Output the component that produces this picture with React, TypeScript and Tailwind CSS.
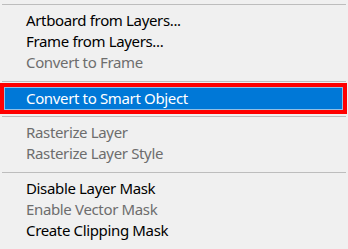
const ENABLED = "text-black";
const DISABLED = "text-[#6d6d6d]";

type Item = { label: string; disabled?: boolean };

function Row({ item }: { item: Item }) {
  return (
    <div className={`h-[21px] pl-[26px] leading-[21px] whitespace-nowrap ${item.disabled ? DISABLED : ENABLED}`}>
      {item.label}
    </div>
  );
}

function Separator() {
  return <div className="ml-[2px] h-px w-[344px] bg-[#bdbdbd]" />;
}

const groupA: Item[] = [
  { label: "Artboard from Layers..." },
  { label: "Frame from Layers..." },
  { label: "Convert to Frame", disabled: true },
];

const groupB: Item[] = [
  { label: "Rasterize Layer", disabled: true },
  { label: "Rasterize Layer Style", disabled: true },
];

const groupC: Item[] = [
  { label: "Disable Layer Mask" },
  { label: "Enable Vector Mask", disabled: true },
  { label: "Create Clipping Mask" },
];

export default function App() {
  return (
    <div
      className="flex h-[249px] w-[348px] flex-col overflow-hidden bg-[#f0f0f0] pt-[4px] text-[15px] tracking-[-0.35px]"
      style={{ fontFamily: '"Noto Sans", "Open Sans", sans-serif' }}
    >
      <Separator />
      <div className="mt-[5px] flex flex-col">
        {groupA.map((it) => (
          <Row key={it.label} item={it} />
        ))}
      </div>
      <div className="mt-[8px]">
        <Separator />
      </div>
      <div className="mt-[1px] w-[347px] border-[4px] border-[#ff0000]">
        <div className="h-[23px] border border-[#8fbfe6] bg-[#0078d7] pl-[21px] leading-[21px] text-white whitespace-nowrap">
          Convert to Smart Object
        </div>
      </div>
      <div className="mt-[2px]">
        <Separator />
      </div>
      <div className="mt-[5px] flex flex-col">
        {groupB.map((it) => (
          <Row key={it.label} item={it} />
        ))}
      </div>
      <div className="mt-[8px]">
        <Separator />
      </div>
      <div className="mt-[5px] flex flex-col">
        {groupC.map((it) => (
          <Row key={it.label} item={it} />
        ))}
      </div>
    </div>
  );
}
